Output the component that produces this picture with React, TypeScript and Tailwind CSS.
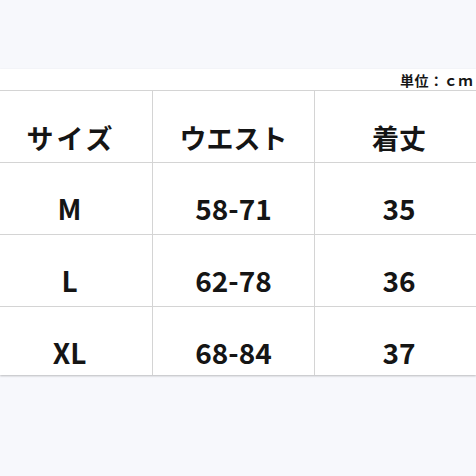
import React from "react";

const rows = [
  ["M", "58-71", "35"],
  ["L", "62-78", "36"],
  ["XL", "68-84", "37"],
];

export default function App() {
  const font = { fontFamily: '"Noto Sans CJK JP", "Noto Sans", sans-serif' };
  return (
    <div className="w-[476px] h-[476px] bg-[#f7f8fc] overflow-hidden text-[#151515]" style={font}>
      <div className="h-[69px]" />
      <div className="bg-white h-[306px] shadow-[0_1px_2px_rgba(0,0,0,0.25)] flex flex-col overflow-hidden">
        <div className="h-[21px] flex justify-end items-start pr-[3px] pt-[1px]">
          <span className="text-[14px] leading-[20px] font-bold tracking-[0.6px]">単位：ｃｍ</span>
        </div>
        <div className="grid grid-cols-[166px_162px_168px] ml-[-13px] w-[496px] border-t border-[#d4d4d4]">
          {["サイズ", "ウエスト", "着丈"].map((h, i) => (
            <div
              key={h}
              className={`h-[72px] flex justify-center items-start pt-[33px] border-b border-[#d4d4d4] ${i < 2 ? "border-r" : ""}`}
            >
              <span className={`text-[27px] leading-[28px] font-bold ${i === 0 ? "tracking-[3px] pl-[3px]" : ""}`}>{h}</span>
            </div>
          ))}
          {rows.map((r, ri) =>
            r.map((c, i) => (
              <div
                key={ri + "-" + i}
                className={`${ri === 2 ? "h-[68px]" : "h-[72px] border-b"} flex justify-center items-start pt-[31px] border-[#d4d4d4] ${i < 2 ? "border-r" : ""}`}
              >
                <span className="text-[28px] leading-[28px] font-bold">{c}</span>
              </div>
            ))
          )}
        </div>
      </div>
    </div>
  );
}
